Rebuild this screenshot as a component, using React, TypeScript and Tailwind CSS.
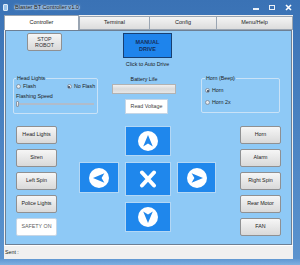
import React from "react";

const BLUE = "bg-[#8ec9f6]";

function WinBtn({ label, white }: { label: string; white?: boolean }) {
  return (
    <div
      className={
        "w-[41px] h-[18px] flex items-center justify-center rounded-[2px] border text-[5.3px] leading-none whitespace-nowrap " +
        (white
          ? "bg-white border-[#c6d6e6] text-[#606060]"
          : "bg-linear-to-b from-[#f6f6f6] to-[#d9d9d9] border-[#8f9092] text-[#202020]")
      }
    >
      {label}
    </div>
  );
}

function NavIcon({ cls }: { cls: string }) {
  return (
    <svg width="20" height="20" viewBox="0 0 20 20" className={cls}>
      <circle cx="10" cy="10" r="10" fill="#ffffff" />
      <path d="M10 4 L14.8 15.4 L10 12.6 L5.2 15.4 Z" fill="#1f87ec" />
    </svg>
  );
}

function Radio({ checked, label }: { checked?: boolean; label: string }) {
  return (
    <div className="flex items-center gap-[2px]">
      <div className="w-[5px] h-[5px] rounded-full border-[0.5px] border-[#8a97a6] bg-linear-to-b from-[#f4f4f4] to-[#d8dde3] flex items-center justify-center">
        {checked && <div className="w-[2px] h-[2px] rounded-full bg-[#2a3d55]" />}
      </div>
      <span className="text-[5.3px] leading-none text-[#1a1a1a]">{label}</span>
    </div>
  );
}

export default function App() {
  return (
    <div className="w-[300px] h-[265px] flex flex-col bg-linear-to-b from-[#3a72b5] to-[#5c94cf] font-['Liberation_Sans',Arial,sans-serif] overflow-hidden">
      {/* title bar */}
      <div className="h-[15px] flex items-center relative">
        <div className="ml-[3px] w-[5px] h-[7px] bg-[#9cc4ea] border-[0.5px] border-[#dbe9f7] rounded-[1px]" />
        <div className="ml-[6px] px-[1px] text-[5.6px] leading-none text-[#1a1a1a] bg-[#9fc2e6]/60 rounded-[3px] [text-shadow:0_0_3px_#ffffff]">
          Blaster BT Controller v1.0
        </div>
        <div className="ml-auto mr-[8px] flex items-center gap-[10px]">
          <div className="w-[6px] h-[2px] bg-white/90 mt-[3px]" />
          <div className="w-[6px] h-[5px] border border-white/90" />
          <svg width="7" height="7" viewBox="0 0 7 7">
            <path d="M1 1 L6 6 M6 1 L1 6" stroke="#ffffff" strokeWidth="1.6" />
          </svg>
        </div>
      </div>
      {/* middle */}
      <div className="flex-1 flex">
        <div className="w-[4px]" />
        <div className="w-[289px] flex flex-col bg-[#f0f0f0]">
          {/* tabs */}
          <div className="h-[15px] flex items-stretch text-[5.5px] leading-none text-[#1a1a1a]">
            <div className="w-[75px] flex items-center justify-center bg-white border-t border-l border-r border-[#9aa5b2]">
              Controller
            </div>
            <div className="w-[71px] flex items-center justify-center bg-linear-to-b from-[#f4f4f4] to-[#dcdcdc] border border-[#9aa5b2] mt-[1px]">
              Terminal
            </div>
            <div className="w-[67px] flex items-center justify-center bg-linear-to-b from-[#f4f4f4] to-[#dcdcdc] border border-l-0 border-[#9aa5b2] mt-[1px]">
              Config
            </div>
            <div className="w-[76px] flex items-center justify-center bg-linear-to-b from-[#f4f4f4] to-[#dcdcdc] border border-l-0 border-[#9aa5b2] mt-[1px]">
              Menu/Help
            </div>
          </div>
          {/* content */}
          <div className={"h-[215px] ml-[1px] mr-[1px] border border-[#6d7f94] flex flex-col " + BLUE}>
            {/* row 1 */}
            <div className="flex items-start mt-[2px]">
              <div className="ml-[21px] w-[35px] h-[18px] rounded-[2px] border border-[#8f9092] bg-linear-to-b from-[#f6f6f6] to-[#d9d9d9] flex flex-col items-center justify-center text-[5.3px] leading-[6px] text-[#303030]">
                <span>STOP</span>
                <span>ROBOT</span>
              </div>
              <div className="ml-[61px] w-[49px] flex flex-col items-center">
                <div className="w-[49px] h-[25px] bg-[#1e84ec] border border-[#173f72] flex flex-col items-center justify-center text-[5.5px] leading-[6.5px] font-bold text-[#142f5c]">
                  <span>MANUAL</span>
                  <span>DRIVE</span>
                </div>
                <div className="mt-[3px] text-[5.3px] leading-[6px] whitespace-nowrap text-[#1a1a1a]">
                  Click to Auto Drive
                </div>
              </div>
            </div>
            {/* row 2 */}
            <div className="flex items-start mt-[8px]">
              <fieldset className="ml-[7px] w-[85px] h-[39px] border border-[#c9e2f7] rounded-[2px] pl-[2px]">
                <legend className="ml-[0px] px-[1px] text-[5.3px] leading-[6px] text-[#1a1a1a]">Head Lights</legend>
                <div className="flex items-center mt-[3px]">
                  <Radio label="Flash" />
                  <div className="ml-[31px]">
                    <Radio checked label="No Flash" />
                  </div>
                </div>
                <div className="mt-[4px] text-[5.3px] leading-[6px] text-[#1a1a1a]">Flashing Speed</div>
                <div className="mt-[2px] relative w-[78px] h-[6px] flex items-center">
                  <div className="w-full h-[2px] bg-[#e8eef4] border-[0.5px] border-[#b0bccb]" />
                  <div className="absolute left-[0px] top-0 w-[3px] h-[6px] bg-linear-to-b from-[#fafafa] to-[#d6d6d6] border-[0.5px] border-[#8a97a6] rounded-[1px]" />
                </div>
              </fieldset>
              <div className="ml-[14px] w-[64px] flex flex-col">
                <div className="mt-[1px] text-[5.3px] leading-[6px] text-center text-[#1a1a1a]">Battery Life</div>
                <div className="mt-[2px] w-[64px] h-[10px] border border-[#b2b2b2] bg-linear-to-b from-[#f0f0f0] via-[#dadada] to-[#e6e6e6]" />
                <div className="mt-[5px] ml-[13px] w-[43px] h-[15px] bg-white border border-[#c6d6e6] flex items-center justify-center text-[5.3px] leading-none text-[#404040]">
                  Read Voltage
                </div>
              </div>
              <fieldset className="ml-[25px] w-[79px] h-[38px] border border-[#c9e2f7] rounded-[2px] pl-[3px]">
                <legend className="px-[1px] text-[5.3px] leading-[6px] text-[#1a1a1a]">Horn (Beep)</legend>
                <div className="mt-[7px]">
                  <Radio checked label="Horn" />
                </div>
                <div className="mt-[7px]">
                  <Radio label="Horn 2x" />
                </div>
              </fieldset>
            </div>
            {/* row 3 */}
            <div className="flex items-start mt-[12px]">
              <div className="ml-[10px] flex flex-col gap-[5px]">
                <WinBtn label="Head Lights" />
                <WinBtn label="Siren" />
                <WinBtn label="Left Spin" />
                <WinBtn label="Police Lights" />
                <WinBtn label="SAFETY ON" white />
              </div>
              <div className="ml-[22px] grid grid-cols-[40px_46px_39px] grid-rows-[30px_34px_30px] gap-x-[6px] gap-y-[6px]">
                <div />
                <div className="bg-[#1f87ec] border border-[#b3d7f5] flex items-center justify-center">
                  <NavIcon cls="" />
                </div>
                <div />
                <div className="h-[31px] bg-[#1f87ec] border border-[#b3d7f5] flex items-center justify-center">
                  <NavIcon cls="-rotate-90" />
                </div>
                <div className="bg-[#1f87ec] border border-[#b3d7f5] flex items-center justify-center">
                  <svg width="20" height="18" viewBox="0 0 20 18">
                    <path d="M4 2.5 L16 15.5 M16 2.5 L4 15.5" stroke="#ffffff" strokeWidth="4" strokeLinecap="round" />
                  </svg>
                </div>
                <div className="h-[31px] bg-[#1f87ec] border border-[#b3d7f5] flex items-center justify-center">
                  <NavIcon cls="rotate-90" />
                </div>
                <div />
                <div className="bg-[#1f87ec] border border-[#b3d7f5] flex items-center justify-center">
                  <NavIcon cls="rotate-180" />
                </div>
                <div />
              </div>
              <div className="ml-[24px] flex flex-col gap-[5px]">
                <WinBtn label="Horn" />
                <WinBtn label="Alarm" />
                <WinBtn label="Right Spin" />
                <WinBtn label="Rear Motor" />
                <WinBtn label="FAN" />
              </div>
            </div>
          </div>
          {/* status bar */}
          <div className="flex-1 border-t border-white flex items-center pl-[1px] text-[5.3px] leading-none text-[#1a1a1a]">
            Sent :
          </div>
        </div>
        <div className="w-[7px]" />
      </div>
      <div className="h-[6px] bg-linear-to-b from-[#5f97d2] to-[#7fb0e0]" />
    </div>
  );
}
